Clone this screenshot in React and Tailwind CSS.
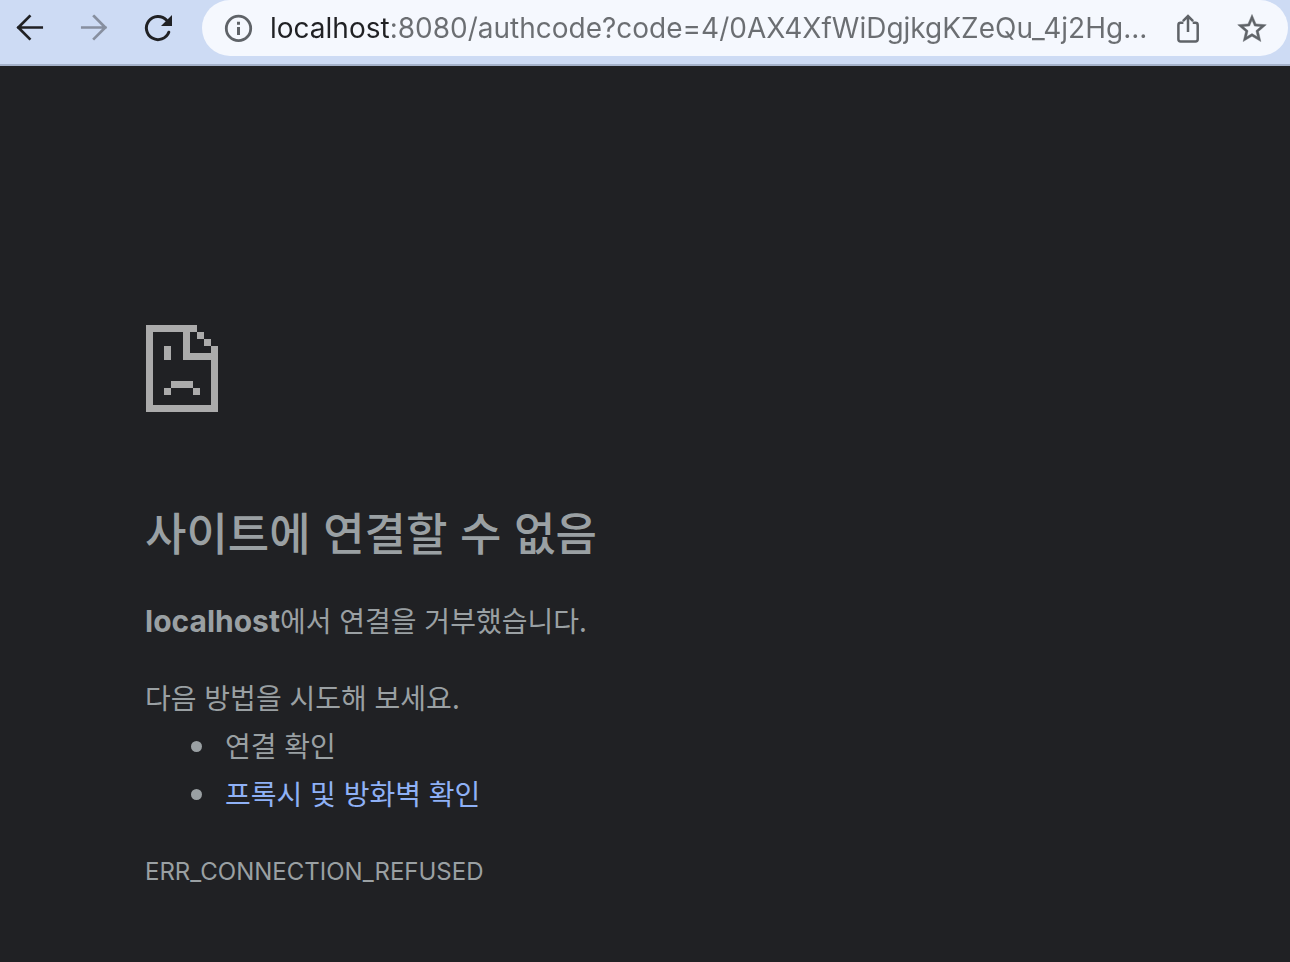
import React, { useState } from "react";

const IconButton = ({ label, disabled, children }) => (
  <button
    type="button"
    aria-label={label}
    disabled={disabled}
    className="flex size-8 shrink-0 items-center justify-center"
  >
    {children}
  </button>
);

const BackIcon = () => (
  <svg width="32" height="32" viewBox="0 0 32 32" fill="none" stroke="currentColor" strokeWidth="2.7">
    <path d="M27.7 15.5H4.4M15.5 4.3L4.3 15.5l11.2 11.2" strokeLinecap="square" />
  </svg>
);

const ForwardIcon = () => (
  <svg width="32" height="32" viewBox="0 0 32 32" fill="none" stroke="currentColor" strokeWidth="2.7">
    <path d="M4.3 15.5h23M16.1 4.3l11.2 11.2-11.2 11.2" strokeLinecap="square" />
  </svg>
);

const ReloadIcon = () => (
  <svg width="32" height="32" viewBox="0 0 32 32" fill="none">
    <path
      d="M26.8 20.2A11.6 11.6 0 1 1 24.4 8"
      stroke="currentColor"
      strokeWidth="3"
      strokeLinecap="round"
    />
    <path d="M30 3v11H19z" fill="currentColor" />
  </svg>
);

const InfoIcon = () => (
  <svg width="32" height="32" viewBox="0 0 32 32" fill="none">
    <circle cx="16.5" cy="16.4" r="12.2" stroke="currentColor" strokeWidth="2.8" />
    <path d="M15 9.8h3v3h-3zM15 15h3v8h-3z" fill="currentColor" />
  </svg>
);

const ShareIcon = () => (
  <svg width="32" height="32" viewBox="0 0 32 32" fill="none" stroke="currentColor" strokeWidth="2.5">
    <path d="M11.4 10.8H8.6a2.2 2.2 0 0 0-2.2 2.2v14.2a2.2 2.2 0 0 0 2.2 2.2h14.9a2.2 2.2 0 0 0 2.2-2.2V13a2.2 2.2 0 0 0-2.2-2.2h-2.8" />
    <path d="M16 20V4.2M10.9 9.2L16 4.1l5.1 5.1" />
  </svg>
);

const StarIcon = () => (
  <svg width="32" height="32" viewBox="0.8 0.3 22.4 22.4" fill="currentColor" stroke="currentColor" strokeWidth="0.3">
    <path d="M22 9.24l-7.19-.62L12 2 9.19 8.63 2 9.24l5.46 4.73L5.82 21 12 17.27 18.18 21l-1.63-7.03L22 9.24zM12 15.4l-3.76 2.27 1-4.28-3.32-2.88 4.38-.38L12 6.1l1.71 4.04 4.38.38-3.32 2.88 1 4.28L12 15.4z" />
  </svg>
);

const SadPage = () => (
  <svg width="72" height="87" viewBox="0 0 72 87" fill="#ababab" shapeRendering="crispEdges">
    <path d="M0 0h51v7H44v21h21v-7h7v66H0zM7 7v73h58V35H37V7z" fillRule="evenodd" />
    <path d="M51 7h7v7h-7zM58 14h7v7h-7z" />
    <path d="M18 21h7v14h-7zM25 56h22v7H25zM18 63h7v7h-7zM47 63h7v7h-7z" />
  </svg>
);

const Toolbar = () => {
  const [url, setUrl] = useState("localhost:8080/authcode?code=4/0AX4XfWiDgjkgKZeQu_4j2Hg...");

  return (
    <header className="flex items-start border-b-2 border-[#a5b2ca] bg-[#cddbf4] pb-2 pr-[2px] text-[#202124]">
      <nav className="flex h-14 items-center gap-8 pl-[14px] pr-7">
        <IconButton label="뒤로">
          <BackIcon />
        </IconButton>
        <span className="text-[#878f9f]">
          <IconButton label="앞으로" disabled>
            <ForwardIcon />
          </IconButton>
        </span>
        <IconButton label="새로고침">
          <ReloadIcon />
        </IconButton>
      </nav>
      <div className="flex h-14 min-w-0 flex-1 items-center rounded-full bg-[#f5f8fe] px-5 text-[#5f6368]">
        <IconButton label="사이트 정보">
          <InfoIcon />
        </IconButton>
        <input
          type="text"
          aria-label="주소창"
          value={url}
          onChange={(e) => setUrl(e.target.value)}
          className="ml-4 h-10 min-w-0 flex-1 bg-linear-to-r from-[#202124] from-[120px] to-[#6b6e72] to-[120px] bg-clip-text font-['Inter',sans-serif] text-[28px] text-transparent outline-none"
        />
        <div className="ml-4 flex gap-8">
          <IconButton label="공유">
            <ShareIcon />
          </IconButton>
          <IconButton label="북마크">
            <StarIcon />
          </IconButton>
        </div>
      </div>
    </header>
  );
};

const App = () => {
  return (
    <div
      lang="ko"
      className="flex min-h-screen flex-col bg-[#202124] font-['Noto_Sans_CJK_KR',sans-serif] text-[#9aa0a3]"
    >
      <Toolbar />
      <main className="px-[145px] pt-[259px] pb-16 text-[28px] leading-[48px]">
        <div className="pl-px">
          <SadPage />
        </div>
        <h1 className="mt-[90px] text-[45px] font-medium leading-[60px]">사이트에 연결할 수 없음</h1>
        <p className="mt-[34px]">
          <strong className="font-['Inter',sans-serif] text-[30px] font-bold">localhost</strong>
          에서 연결을 거부했습니다.
        </p>
        <p className="mt-7">다음 방법을 시도해 보세요.</p>
        <ul className="list-disc pl-[74px]">
          <li className="pl-[6px]">연결 확인</li>
          <li className="pl-[6px]">
            <a href="#buttons" className="text-[#8fb1f6]">
              프록시 및 방화벽 확인
            </a>
          </li>
        </ul>
        <p className="mt-[31px] font-['Inter',sans-serif] text-2xl leading-[48px]">
          ERR_CONNECTION_REFUSED
        </p>
      </main>
    </div>
  );
};

export default App;
